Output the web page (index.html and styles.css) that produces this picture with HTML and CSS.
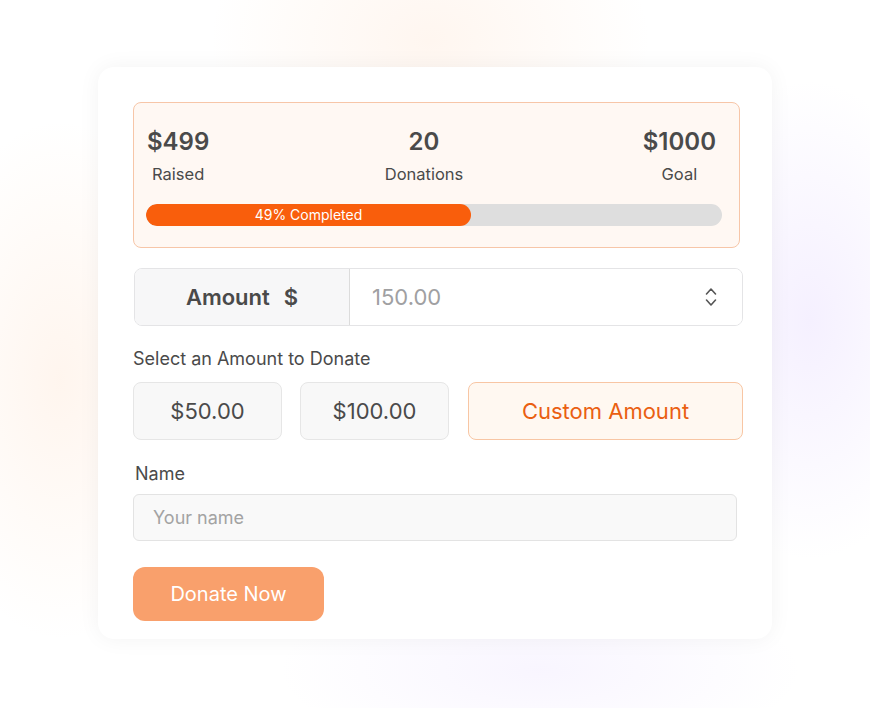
FILE: index.html
```html
<!DOCTYPE html>
<html lang="en">
<head>
<meta charset="utf-8">
<title>Donate</title>
<link rel="stylesheet" href="styles.css">
</head>
<body>
<div class="page">
  <div class="card">
    <div class="stats">
      <div class="stats-row">
        <div class="stat"><div class="stat-value">$499</div><div class="stat-label">Raised</div></div>
        <div class="stat stat-mid"><div class="stat-value">20</div><div class="stat-label">Donations</div></div>
        <div class="stat"><div class="stat-value">$1000</div><div class="stat-label">Goal</div></div>
      </div>
      <div class="bar"><div class="bar-fill" style="width:325px">49% Completed</div></div>
    </div>

    <div class="amount-group">
      <div class="addon"><span>Amount</span><span>$</span></div>
      <div class="amount-input">
        <span class="amount-value">150.00</span>
        <svg class="spin" width="14" height="22" viewBox="0 0 14 22" fill="none" stroke="#555555" stroke-width="1.6" stroke-linecap="round" stroke-linejoin="round"><path d="M2.5 8 L7 3 L11.5 8"/><path d="M2.5 14 L7 19 L11.5 14"/></svg>
      </div>
    </div>

    <div class="select-label">Select an Amount to Donate</div>
    <div class="choices">
      <div class="choice c-small">$50.00</div>
      <div class="choice c-small c-second">$100.00</div>
      <div class="choice c-custom">Custom Amount</div>
    </div>

    <div class="name-label">Name</div>
    <div class="name-input">Your name</div>

    <div class="donate">Donate Now</div>
  </div>
</div>
</body>
</html>
```

FILE: styles.css
```css
* { box-sizing: border-box; }
html, body { margin: 0; padding: 0; }
body {
  width: 870px;
  height: 708px;
  overflow: hidden;
  font-family: Inter, "Noto Sans", sans-serif;
  color: #4a4a4a;
  background:
    radial-gradient(ellipse 220px 160px at 430px 40px, rgba(255, 200, 160, 0.16), rgba(255,255,255,0) 100%),
    radial-gradient(ellipse 140px 260px at 60px 380px, rgba(255, 195, 150, 0.16), rgba(255,255,255,0) 100%),
    radial-gradient(ellipse 140px 240px at 810px 320px, rgba(205, 180, 255, 0.20), rgba(255,255,255,0) 100%),
    radial-gradient(ellipse 260px 90px at 540px 670px, rgba(215, 195, 255, 0.16), rgba(255,255,255,0) 100%),
    #ffffff;
}
.page {
  padding: 67px 0 0 98px;
}
.card {
  width: 674px;
  height: 572px;
  background: #ffffff;
  border-radius: 16px;
  box-shadow: 0 0 22px rgba(0, 0, 0, 0.05);
  padding: 35px 29px 18px 35px;
  display: flex;
  flex-direction: column;
}

.stats {
  width: 607px;
  height: 146px;
  background: #fff8f3;
  border: 1px solid #f7c6a8;
  border-radius: 8px;
  padding: 24px 0 0 12px;
}
.stats-row {
  display: flex;
  justify-content: space-between;
  padding: 0 23px 0 1px;
}
.stat {
  display: flex;
  flex-direction: column;
  align-items: center;
  gap: 7px;
}
.stat-mid { margin-right: 4px; }
.stat-value {
  font-size: 24px;
  line-height: 30px;
  font-weight: 600;
  color: #4a4a4a;
}
.stat-label {
  font-size: 16.5px;
  line-height: 20px;
  color: #4a4a4a;
}
.bar {
  margin-top: 20px;
  width: 576px;
  height: 22px;
  border-radius: 11px;
  background: #dedede;
  overflow: hidden;
}
.bar-fill {
  height: 22px;
  border-radius: 11px;
  background: #f95e0c;
  color: #ffffff;
  font-size: 14px;
  line-height: 22px;
  text-align: center;
}

.amount-group {
  margin-top: 20px;
  margin-left: 1px;
  width: 609px;
  height: 58px;
  border: 1px solid #e4e4e6;
  border-radius: 8px;
  display: flex;
  overflow: hidden;
}
.addon {
  width: 215px;
  background: #f7f7f8;
  border-right: 1px solid #dcdcdc;
  display: flex;
  align-items: center;
  justify-content: center;
  gap: 14px;
  font-size: 22px;
  font-weight: 600;
  color: #4a4a4a;
}
.amount-input {
  flex: 1;
  display: flex;
  align-items: center;
  justify-content: space-between;
  padding: 0 24px 0 22px;
  background: #ffffff;
}
.amount-value {
  font-size: 22px;
  color: #a0a0a2;
}
.spin { display: block; }

.select-label {
  margin-top: 21px;
  font-size: 18px;
  line-height: 23px;
  color: #4a4a4a;
}
.choices {
  margin-top: 12px;
  display: flex;
  width: 610px;
}
.choice {
  height: 58px;
  border-radius: 8px;
  display: flex;
  align-items: center;
  justify-content: center;
  font-size: 22px;
}
.c-small {
  width: 149px;
  background: #f8f8f8;
  border: 1px solid #e6e6e6;
  color: #4a4a4a;
}
.c-second { margin-left: 18px; }
.c-custom {
  margin-left: 19px;
  width: 275px;
  background: #fff8f1;
  border: 1.5px solid #f8c6a4;
  color: #ea5f12;
}

.name-label {
  margin-top: 22px;
  margin-left: 2px;
  font-size: 18px;
  line-height: 23px;
  color: #4a4a4a;
}
.name-input {
  margin-top: 9px;
  width: 604px;
  height: 47px;
  background: #f9f9f9;
  border: 1px solid #e3e3e3;
  border-radius: 6px;
  padding-left: 19px;
  display: flex;
  align-items: center;
  font-size: 18px;
  color: #a3a3a3;
}

.donate {
  margin-top: 26px;
  width: 191px;
  height: 54px;
  border-radius: 12px;
  background: #f9a06c;
  color: #ffffff;
  font-size: 20px;
  display: flex;
  align-items: center;
  justify-content: center;
}
```
